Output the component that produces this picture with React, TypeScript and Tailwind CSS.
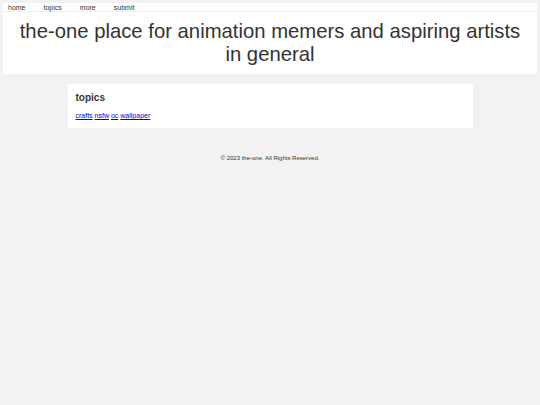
export default function App() {
  return (
    <div className="min-h-[405px] bg-[#f2f2f2] pt-[3px] font-['Liberation_Sans',Arial,sans-serif] text-[#333]">
      <header className="mx-[3px] bg-white">
        <nav className="flex h-[9px] items-center gap-[18px] border-b border-[#eeeeee] pl-[5px] text-[7px] leading-none text-[#333]">
          <a href="#">home</a>
          <a href="#">topics</a>
          <a href="#">more</a>
          <a href="#">submit</a>
        </nav>
        <h1 className="px-[12px] pt-[8px] pb-[8px] text-center text-[20.3px] leading-[23px] font-normal text-[#333]">
          the-one place for animation memers and aspiring artists in general
        </h1>
      </header>
      <main className="mx-auto mt-[10px] w-3/4 bg-white px-[8px] pt-[8px] pb-[8px]">
        <h2 className="text-[10px] font-bold leading-[12px] text-[#333]">topics</h2>
        <div className="mt-[7px] text-[7px] leading-[9px]">
          <a href="#" className="text-[#0000ee] underline">crafts</a>{' '}
          <a href="#" className="text-[#0000ee] underline">nsfw</a>{' '}
          <a href="#" className="text-[#0000ee] underline">oc</a>{' '}
          <a href="#" className="text-[#0000ee] underline">wallpaper</a>
        </div>
      </main>
      <footer className="mt-[26px] text-center text-[6px] leading-[9px] text-[#333]">
        © 2023 the-one. All Rights Reserved.
      </footer>
    </div>
  );
}
